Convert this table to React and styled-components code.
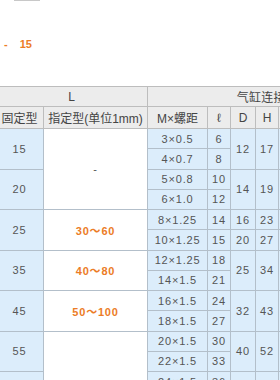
import React from "react";
import styled, { createGlobalStyle } from "styled-components";

const Global = createGlobalStyle`
  html, body { margin: 0; padding: 0; background: #fff; }
  body { font-family: "Liberation Sans", "Noto Sans CJK SC", sans-serif; }
`;

const Page = styled.div`
  width: 280px;
  height: 380px;
  overflow: hidden;
  display: flex;
  flex-direction: column;
`;

const TopBox = styled.div`
  width: 24px;
  height: 2px;
  margin-left: 14px;
  border: 1px solid #c8c8c8;
  border-top: none;
`;

const SizeLine = styled.div`
  display: flex;
  gap: 12px;
  margin: 37px 0 0 4px;
  font-size: 11px;
  line-height: 13px;
  font-weight: bold;
  color: #ec7c26;
`;

const TableWrap = styled.div`
  margin-top: 35px;
  margin-left: -5px;
`;

const Table = styled.table`
  border-collapse: collapse;
  table-layout: fixed;
  width: 404px;
  font-size: 11px;
  color: #555;
`;

const HeadRow = styled.tr`
  height: ${(p) => p.$h}px;
`;

const Row = styled.tr`
  height: 20.25px;
`;

const Th = styled.th`
  background: #ececec;
  border: 1px solid #bdbdbd;
  font-weight: normal;
  font-size: 12px;
  color: #444;
  padding: 0;
  white-space: nowrap;
  overflow: hidden;
  text-align: center;
  letter-spacing: ${(p) => (p.$spaced ? "0.3px" : "0")};
`;

const Td = styled.td`
  background: ${(p) => (p.$plain ? "#fff" : "#dcedfb")};
  border: 1px solid #b3bfca;
  padding: 0;
  text-align: center;
  white-space: nowrap;
  overflow: hidden;
  letter-spacing: 0.8px;
  color: ${(p) => (p.$accent ? "#ec7c26" : "#555")};
  font-weight: ${(p) => (p.$accent ? "bold" : "normal")};
`;

const widths = [48, 104, 60, 23, 25, 23, 30, 30, 30, 31];

// one entry per sub row: thread, length, and the merged cells that start here
const rows = [
  { fixed: "15", spec: { text: "-", span: 4 }, m: "3×0.5", l: "6", dh: ["12", "17", 2] },
  { m: "4×0.7", l: "8" },
  { fixed: "20", m: "5×0.8", l: "10", dh: ["14", "19", 2] },
  { m: "6×1.0", l: "12" },
  { fixed: "25", spec: { text: "30～60", span: 2, accent: true }, m: "8×1.25", l: "14", dh: ["16", "23", 1] },
  { m: "10×1.25", l: "15", dh: ["20", "27", 1] },
  { fixed: "35", spec: { text: "40～80", span: 2, accent: true }, m: "12×1.25", l: "18", dh: ["25", "34", 2] },
  { m: "14×1.5", l: "21" },
  { fixed: "45", spec: { text: "50～100", span: 2, accent: true }, m: "16×1.5", l: "24", dh: ["32", "43", 2] },
  { m: "18×1.5", l: "27" },
  { fixed: "55", spec: { text: "", span: 4 }, m: "20×1.5", l: "30", dh: ["40", "52", 2] },
  { m: "22×1.5", l: "33" },
  { fixed: "65", m: "24×1.5", l: "36", dh: ["50", "62", 2] },
  { m: "27×1.5", l: "40" },
];

const extra = ["B", "C", "K", "N"];

export default function App() {
  return (
    <Page>
      <Global />
      <TopBox />
      <SizeLine>
        <span>-</span>
        <span>15</span>
      </SizeLine>
      <TableWrap>
        <Table>
          <colgroup>
            {widths.map((w, i) => (
              <col key={i} style={{ width: w }} />
            ))}
          </colgroup>
          <thead>
            <HeadRow $h={20}>
              <Th colSpan={2}>L</Th>
              <Th colSpan={8} $spaced>气缸连接螺纹</Th>
            </HeadRow>
            <HeadRow $h={22}>
              <Th>固定型</Th>
              <Th>指定型(单位1mm)</Th>
              <Th>M×螺距</Th>
              <Th>ℓ</Th>
              <Th>D</Th>
              <Th>H</Th>
              {extra.map((e) => (
                <Th key={e}>{e}</Th>
              ))}
            </HeadRow>
          </thead>
          <tbody>
            {rows.map((r, i) => (
              <Row key={i}>
                {r.fixed && <Td rowSpan={2}>{r.fixed}</Td>}
                {r.spec && (
                  <Td $plain $accent={r.spec.accent} rowSpan={r.spec.span}>
                    {r.spec.text}
                  </Td>
                )}
                <Td>{r.m}</Td>
                <Td>{r.l}</Td>
                {r.dh && (
                  <>
                    <Td rowSpan={r.dh[2]}>{r.dh[0]}</Td>
                    <Td rowSpan={r.dh[2]}>{r.dh[1]}</Td>
                    {extra.map((e) => (
                      <Td key={e} rowSpan={r.dh[2]} />
                    ))}
                  </>
                )}
              </Row>
            ))}
          </tbody>
        </Table>
      </TableWrap>
    </Page>
  );
}
